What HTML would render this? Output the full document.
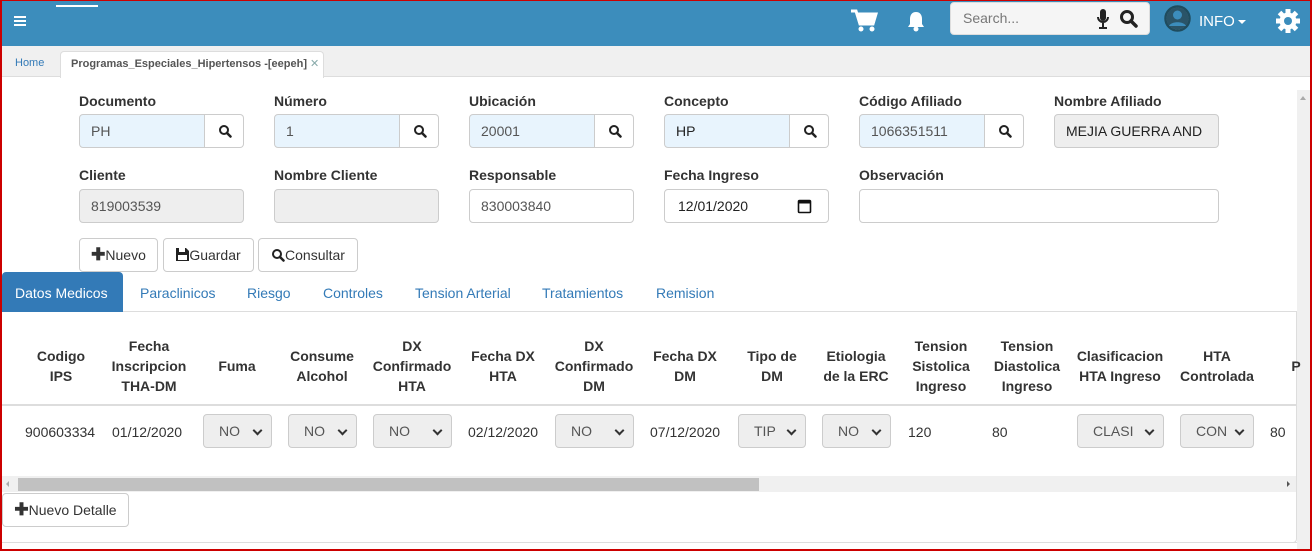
<!DOCTYPE html>
<html><head><meta charset="utf-8"><style>
*{box-sizing:border-box;margin:0;padding:0}
body{width:1312px;height:551px;overflow:hidden;position:relative;background:#fff;font-family:"Liberation Sans",Arial,sans-serif;font-size:14px;color:#333}
.a{position:absolute}
.frame{position:absolute;left:0;top:0;width:1312px;height:551px;border:2px solid #c00;border-top-width:1px;pointer-events:none;z-index:10}
.hdr{left:0;top:0;width:1312px;height:46px;background:#3c8dbc}
.lbl{font-weight:bold;font-size:14px;color:#333}
.inp{height:34px;border:1px solid #ccc;border-radius:4px;padding:0 11px;line-height:32px;font-size:14px;color:#555;background:#fff}
.blue{background:#e8f4fd;border-radius:4px 0 0 4px}
.sb{width:39px;height:34px;border:1px solid #ccc;border-left:none;border-radius:0 4px 4px 0;background:#fff}
.gray{background:#eee}
.btn{height:34px;border:1px solid #ccc;border-radius:4px;background:#fff;line-height:32px;font-size:14px;color:#333;text-align:center}
.tab{top:285px;font-size:14px;color:#337ab7}
.th{font-weight:bold;font-size:14px;text-align:center;line-height:20px;color:#333}
.sel{top:414px;height:34px;border:1px solid #ccc;border-radius:4px;background:#eee;font-size:14px;color:#555;line-height:32px;padding-left:15px}
.sel:after{content:"";position:absolute;right:10px;top:12px;width:5px;height:5px;border-right:2px solid #333;border-bottom:2px solid #333;transform:rotate(45deg)}
.td{top:424px;font-size:14px;color:#333}
</style></head><body>
<div class="frame"></div>
<div class="a hdr"></div>
<div class="a" style="left:56px;top:5px;width:42px;height:2px;background:#fff"></div>
<div class="a" style="left:14px;top:16px;width:12px;height:2px;background:#fff;box-shadow:0 4px 0 #fff,0 8px 0 #fff"></div>
<svg class="a" style="left:850px;top:9px" width="28" height="24" viewBox="0 0 28 24"><path d="M1 2h5l4 13h13l3-10H8" fill="none" stroke="#fff" stroke-width="3"/><rect x="8" y="5" width="17" height="9" fill="#fff"/><circle cx="11" cy="20" r="2.5" fill="#fff"/><circle cx="22" cy="20" r="2.5" fill="#fff"/></svg>
<svg class="a" style="left:906px;top:10px" width="20" height="22" viewBox="0 0 20 22"><path d="M10 2c-4 0-6 3-6 7v5l-2 3h16l-2-3V9c0-4-2-7-6-7z" fill="#fff"/><circle cx="10" cy="19" r="2.5" fill="#fff"/></svg>
<div class="a" style="left:950px;top:2px;width:200px;height:33px;background:#f5f5f5;border:1px solid #ddd;border-radius:4px"></div>
<div class="a" style="left:963px;top:10px;font-size:14px;color:#777">Search...</div>
<svg class="a" style="left:1096px;top:8px" width="14" height="22" viewBox="0 0 14 22"><rect x="4" y="1" width="6" height="12" rx="3" fill="#222"/><path d="M2 9a5 5 0 0 0 10 0M7 15v4M3 20h8" fill="none" stroke="#222" stroke-width="2"/></svg>
<svg class="a" style="left:1119px;top:9px" width="20" height="20" viewBox="0 0 20 20"><circle cx="8" cy="8" r="5.5" fill="none" stroke="#222" stroke-width="3"/><path d="M12 12l5 5" stroke="#222" stroke-width="3.5" stroke-linecap="round"/></svg>
<svg class="a" style="left:1164px;top:5px" width="27" height="27" viewBox="0 0 27 27"><circle cx="13.5" cy="13.5" r="12" fill="#fff" stroke="#1f4c5e" stroke-width="2.5"/><circle cx="13.5" cy="13.5" r="11" fill="#2a5468"/><circle cx="13.5" cy="10" r="4.5" fill="#3c8dbc"/><path d="M5 21c2-5 15-5 17 0" fill="#3c8dbc"/></svg>
<div class="a" style="left:1199px;top:13px;color:#fff;font-size:15px">INFO</div>
<div class="a" style="left:1238px;top:20px;border-left:4px solid transparent;border-right:4px solid transparent;border-top:4px solid #fff"></div>
<svg class="a" style="left:1275px;top:8px" width="26" height="26" viewBox="0 0 26 26"><g fill="#fff"><circle cx="13" cy="13" r="8.5"/><g stroke="#fff" stroke-width="5"><path d="M13 1v24M1 13h24M4.5 4.5l17 17M21.5 4.5l-17 17"/></g></g><circle cx="13" cy="13" r="4" fill="#3c8dbc"/></svg>
<div class="a" style="left:0;top:46px;width:1312px;height:31px;background:#f0f0f0;border-bottom:1px solid #ddd"></div>
<div class="a" style="left:15px;top:57px;font-size:11px;color:#337ab7">Home</div>
<div class="a" style="left:60px;top:51px;width:264px;height:27px;background:#fff;border:1px solid #ddd;border-bottom:none;border-radius:4px 4px 0 0"></div>
<div class="a" style="left:71px;top:57px;font-size:11px;color:#555;font-weight:bold">Programas_Especiales_Hipertensos -[eepeh] <span style="color:#8aa;font-weight:normal">✕</span></div>
<div class="a" style="left:1297px;top:90px;width:13px;height:461px;background:#f0f0f0"></div>
<div class="a" style="left:1300px;top:96px;border-left:3px solid transparent;border-right:3px solid transparent;border-bottom:4px solid #aaa"></div>

<div class="a lbl" style="left:79px;top:93px">Documento</div>
<div class="a lbl" style="left:274px;top:93px">Número</div>
<div class="a lbl" style="left:469px;top:93px">Ubicación</div>
<div class="a lbl" style="left:664px;top:93px">Concepto</div>
<div class="a lbl" style="left:859px;top:93px">Código Afiliado</div>
<div class="a lbl" style="left:1054px;top:93px">Nombre Afiliado</div>

<div class="a inp blue" style="left:79px;top:114px;width:126px">PH</div><div class="a sb" style="left:205px;top:114px"></div>
<div class="a inp blue" style="left:274px;top:114px;width:126px">1</div><div class="a sb" style="left:400px;top:114px"></div>
<div class="a inp blue" style="left:469px;top:114px;width:126px">20001</div><div class="a sb" style="left:595px;top:114px"></div>
<div class="a inp blue" style="left:664px;top:114px;width:126px;color:#222">HP</div><div class="a sb" style="left:790px;top:114px"></div>
<div class="a inp blue" style="left:859px;top:114px;width:126px">1066351511</div><div class="a sb" style="left:985px;top:114px"></div>
<div class="a inp gray" style="left:1054px;top:114px;width:165px;color:#222">MEJIA GUERRA AND</div>
<svg width="0" height="0" style="position:absolute"><defs><g id="mg"><circle cx="6" cy="6" r="4" fill="none" stroke="#222" stroke-width="2"/><path d="M9 9l3.5 3.5" stroke="#222" stroke-width="2.5" stroke-linecap="round"/></g></defs></svg>
<svg class="a" style="left:218px;top:124px" width="14" height="14"><use href="#mg"/></svg>
<svg class="a" style="left:413px;top:124px" width="14" height="14"><use href="#mg"/></svg>
<svg class="a" style="left:608px;top:124px" width="14" height="14"><use href="#mg"/></svg>
<svg class="a" style="left:803px;top:124px" width="14" height="14"><use href="#mg"/></svg>
<svg class="a" style="left:998px;top:124px" width="14" height="14"><use href="#mg"/></svg>

<div class="a lbl" style="left:79px;top:167px">Cliente</div>
<div class="a lbl" style="left:274px;top:167px">Nombre Cliente</div>
<div class="a lbl" style="left:469px;top:167px">Responsable</div>
<div class="a lbl" style="left:664px;top:167px">Fecha Ingreso</div>
<div class="a lbl" style="left:859px;top:167px">Observación</div>
<div class="a inp gray" style="left:79px;top:189px;width:165px">819003539</div>
<div class="a inp gray" style="left:274px;top:189px;width:165px"></div>
<div class="a inp" style="left:469px;top:189px;width:165px">830003840</div>
<div class="a inp" style="left:664px;top:189px;width:165px;color:#222;padding-left:13px">12/01/2020</div>
<svg class="a" style="left:797px;top:198px" width="15" height="16" viewBox="0 0 15 16"><rect x="1.5" y="2.5" width="12" height="12" rx="1" fill="none" stroke="#111" stroke-width="1.6"/><rect x="1.5" y="2.5" width="12" height="3" fill="#111"/></svg>
<div class="a inp" style="left:859px;top:189px;width:360px"></div>

<div class="a btn" style="left:79px;top:238px;width:79px"><b style="font-size:17px">✚</b>Nuevo</div>
<div class="a btn" style="left:163px;top:238px;width:91px">
<svg width="13" height="13" viewBox="0 0 13 13" style="vertical-align:-1px"><path d="M0 0h10l3 3v10H0z" fill="#222"/><rect x="3" y="0" width="6" height="4" fill="#fff"/><rect x="2" y="7" width="9" height="5" fill="#fff"/></svg>Guardar</div>
<div class="a btn" style="left:258px;top:238px;width:100px"><svg width="14" height="14" style="vertical-align:-2px"><use href="#mg"/></svg>Consultar</div>

<div class="a" style="left:2px;top:272px;width:121px;height:40px;background:#337ab7;border-radius:4px 4px 0 0"></div>
<div class="a" style="left:15px;top:285px;color:#fff;font-size:14px">Datos Medicos</div>
<div class="a tab" style="left:140px">Paraclinicos</div>
<div class="a tab" style="left:247px">Riesgo</div>
<div class="a tab" style="left:323px">Controles</div>
<div class="a tab" style="left:415px">Tension Arterial</div>
<div class="a tab" style="left:542px">Tratamientos</div>
<div class="a tab" style="left:656px">Remision</div>
<div class="a" style="left:123px;top:311px;width:1174px;height:1px;background:#ddd"></div>
<div class="a" style="left:2px;top:312px;width:1295px;height:231px;border:1px solid #ddd;border-top:none;border-left:none;border-radius:0 0 4px 0"></div>
<div class="a" style="left:2px;top:542px;width:1295px;height:1px;background:#ddd"></div>

<div class="a th" style="left:21px;top:346px;width:80px">Codigo<br>IPS</div>
<div class="a th" style="left:104px;top:336px;width:90px">Fecha<br>Inscripcion<br>THA-DM</div>
<div class="a th" style="left:207px;top:356px;width:60px">Fuma</div>
<div class="a th" style="left:282px;top:346px;width:80px">Consume<br>Alcohol</div>
<div class="a th" style="left:367px;top:336px;width:90px">DX<br>Confirmado<br>HTA</div>
<div class="a th" style="left:463px;top:346px;width:80px">Fecha DX<br>HTA</div>
<div class="a th" style="left:549px;top:336px;width:90px">DX<br>Confirmado<br>DM</div>
<div class="a th" style="left:645px;top:346px;width:80px">Fecha DX<br>DM</div>
<div class="a th" style="left:732px;top:346px;width:80px">Tipo de<br>DM</div>
<div class="a th" style="left:816px;top:346px;width:80px">Etiologia<br>de la ERC</div>
<div class="a th" style="left:901px;top:336px;width:80px">Tension<br>Sistolica<br>Ingreso</div>
<div class="a th" style="left:987px;top:336px;width:80px">Tension<br>Diastolica<br>Ingreso</div>
<div class="a th" style="left:1070px;top:346px;width:100px">Clasificacion<br>HTA Ingreso</div>
<div class="a th" style="left:1172px;top:346px;width:90px">HTA<br>Controlada</div>
<div class="a th" style="left:1286px;top:356px;width:20px">P</div>
<div class="a" style="left:2px;top:404px;width:1295px;height:2px;background:#ddd"></div>

<div class="a td" style="left:25px">900603334</div>
<div class="a td" style="left:112px">01/12/2020</div>
<div class="a sel" style="left:203px;width:69px">NO</div>
<div class="a sel" style="left:288px;width:69px">NO</div>
<div class="a sel" style="left:373px;width:79px">NO</div>
<div class="a td" style="left:468px">02/12/2020</div>
<div class="a sel" style="left:555px;width:79px">NO</div>
<div class="a td" style="left:650px">07/12/2020</div>
<div class="a sel" style="left:738px;width:68px">TIP</div>
<div class="a sel" style="left:822px;width:69px">NO</div>
<div class="a td" style="left:908px">120</div>
<div class="a td" style="left:992px">80</div>
<div class="a sel" style="left:1077px;width:87px">CLASI</div>
<div class="a sel" style="left:1180px;width:74px;overflow:hidden">CON</div>
<div class="a td" style="left:1270px">80</div>

<div class="a" style="left:2px;top:476px;width:1294px;height:16px;background:#f0f0f0"></div>
<div class="a" style="left:18px;top:478px;width:741px;height:13px;background:#c1c1c1"></div>
<div class="a" style="left:6px;top:481px;border-top:3px solid transparent;border-bottom:3px solid transparent;border-right:3px solid #aaa"></div>
<div class="a" style="left:1287px;top:481px;border-top:3px solid transparent;border-bottom:3px solid transparent;border-left:3px solid #555"></div>
<div class="a btn" style="left:2px;top:493px;width:127px"><b style="font-size:17px">✚</b>Nuevo Detalle</div>
</body></html>
